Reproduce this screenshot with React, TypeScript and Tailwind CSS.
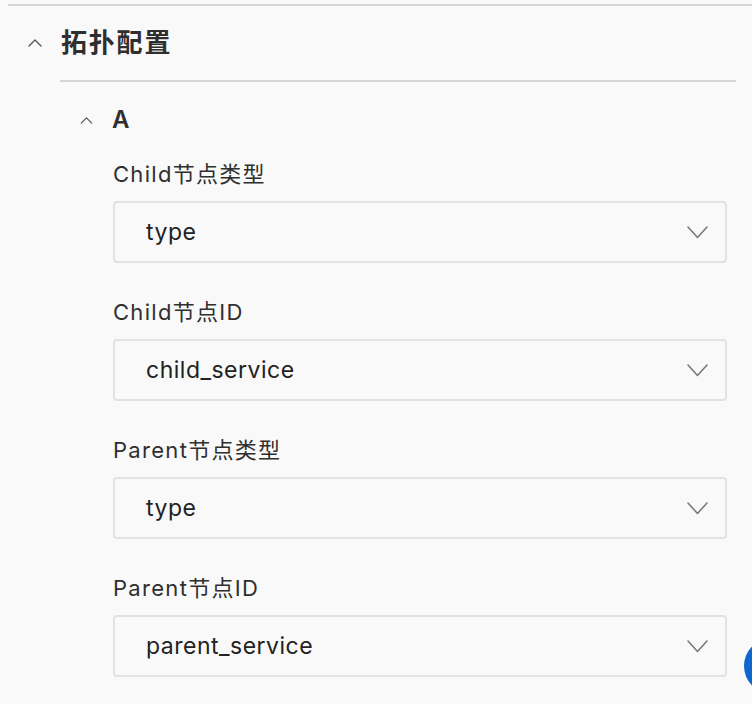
import React from "react";

const Up = ({ className }: { className?: string }) => (
  <svg className={className} viewBox="0 0 14 8" fill="none" stroke="currentColor" strokeWidth="1.4" strokeLinecap="round" strokeLinejoin="round">
    <path d="M1 7 L7 1 L13 7" />
  </svg>
);

const Down = () => (
  <svg className="w-[21px] h-[13px] text-[#7a7a7a]" viewBox="0 0 21 13" fill="none" stroke="currentColor" strokeWidth="1.6" strokeLinecap="round" strokeLinejoin="round">
    <path d="M1 1 L10.5 11.5 L20 1" />
  </svg>
);

const fields = [
  { label: "Child节点类型", value: "type" },
  { label: "Child节点ID", value: "child_service" },
  { label: "Parent节点类型", value: "type" },
  { label: "Parent节点ID", value: "parent_service" },
];

export default function App() {
  return (
    <div className="relative w-[752px] h-[704px] overflow-hidden bg-[#f9f9f9] text-[#2f2f2f] font-['Inter','Noto_Sans_CJK_SC',sans-serif]">
      <div className="ml-[8px] mt-[4px] h-[2px] bg-[#d4d6da]" />
      <div className="flex items-center h-[74px] pl-[28px]">
        <Up className="w-[14px] h-[8px] text-[#555]" />
        <span className="ml-[19px] text-[26px] font-semibold leading-none tracking-[1.8px]">拓扑配置</span>
      </div>
      <div className="ml-[60px] mr-[16px] h-[2px] bg-[#d4d6da]" />
      <div className="flex items-center h-[28px] mt-[24px] pl-[80px]">
        <Up className="w-[13px] h-[7px] text-[#555]" />
        <span className="ml-[19px] text-[24px] font-semibold leading-none">A</span>
      </div>
      <div className="flex flex-col gap-[35px] mt-[26px] ml-[113px] mr-[25px]">
        {fields.map((f) => (
          <div key={f.label} className="flex flex-col">
            <div className="h-[28px] leading-[28px] text-[22px] tracking-[1.3px]">{f.label}</div>
            <div className="mt-[13px] h-[62px] flex items-center justify-between rounded-[4px] border-2 border-[#e2e2e2] pl-[31px] pr-[17px]">
              <span className="text-[23px] tracking-[0.5px] text-[#222]">{f.value}</span>
              <Down />
            </div>
          </div>
        ))}
      </div>
      <div className="absolute left-[744px] top-[638px] w-[56px] h-[56px] rounded-full bg-[#0e66cf]" />
    </div>
  );
}
